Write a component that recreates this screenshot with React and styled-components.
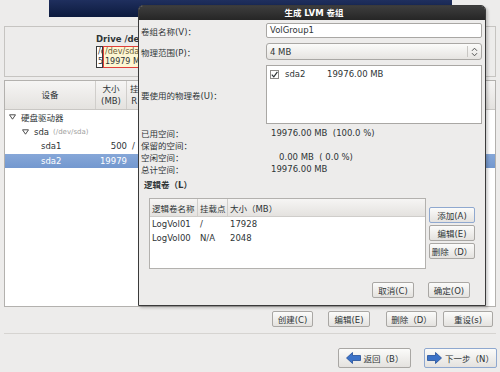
import styled, { createGlobalStyle } from "styled-components";

const GlobalStyle = createGlobalStyle`
  html, body { margin: 0; padding: 0; }
  body {
    width: 500px;
    height: 372px;
    overflow: hidden;
    background: #edeceb;
    font-family: "DejaVu Sans", "Noto Sans CJK SC", sans-serif;
    font-size: 8.5px;
    color: #2e3436;
  }
`;

const Page = styled.div`
  position: relative;
  width: 500px;
  height: 372px;
  display: flex;
  flex-direction: column;
`;

const Banner = styled.div`
  margin-left: 49px;
  width: 403px;
  height: 17px;
  background: linear-gradient(#1f2f5e, #0c1a3d);
`;

const DriveBox = styled.div`
  margin: 9px 4px 0;
  height: 51px;
  box-sizing: border-box;
  border: 1px solid #c6c4c1;
  padding: 6px 0 0 91px;
  overflow: hidden;
`;

const DriveTitle = styled.div`
  font-weight: bold;
  height: 12px;
  line-height: 12px;
  white-space: nowrap;
`;

const DriveBar = styled.div`
  display: flex;
  margin-top: 1px;
  height: 22px;
`;

const BarSeg = styled.div`
  box-sizing: border-box;
  width: ${(p) => p.$w}px;
  height: 22px;
  border: 1px solid ${(p) => p.$border};
  background: ${(p) => p.$bg};
  color: ${(p) => p.$color || "#2e3436"};
  font-size: 8px;
  line-height: 10px;
  padding-left: 1px;
  overflow: hidden;
  white-space: nowrap;
`;

const TablePanel = styled.div`
  margin: 3px 4px 0;
  height: 227px;
  box-sizing: border-box;
  border: 1px solid #b3b1ae;
  background: #fff;
  display: flex;
  flex-direction: column;
  overflow: hidden;
`;

const TableHead = styled.div`
  display: grid;
  grid-template-columns: 91px 31px 1fr;
  height: 28px;
  background: linear-gradient(#f6f5f4, #e4e2df);
  border-bottom: 1px solid #c9c7c4;
`;

const HeadCell = styled.div`
  display: flex;
  align-items: center;
  justify-content: ${(p) => (p.$left ? "flex-start" : "center")};
  text-align: center;
  line-height: 12px;
  padding-left: ${(p) => (p.$left ? 3 : 0)}px;
  border-right: ${(p) => (p.$sep ? "1px solid #d0cecb" : "none")};
  white-space: pre;
`;

const TreeRow = styled.div`
  display: grid;
  grid-template-columns: 91px 31px 1fr;
  height: 14.5px;
  align-items: center;
  background: ${(p) => (p.$sel ? "linear-gradient(#86a7d8, #7398cf)" : "transparent")};
  color: ${(p) => (p.$sel ? "#fff" : "#2e3436")};
`;

const TreeName = styled.div`
  display: flex;
  align-items: center;
  padding-left: ${(p) => p.$indent}px;
  white-space: nowrap;
`;

const Dim = styled.span`
  color: #a0a09e;
  font-size: 7px;
  margin-left: 4px;
`;

const SizeCell = styled.div`
  text-align: right;
`;

const MountCell = styled.div`
  padding-left: 5px;
`;

const ActionRow = styled.div`
  display: flex;
  justify-content: flex-end;
  margin-top: 4px;
  padding-right: 7px;
`;

const Btn = styled.button`
  box-sizing: border-box;
  width: ${(p) => p.$w}px;
  height: ${(p) => p.$h || 16}px;
  margin-left: ${(p) => p.$ml || 0}px;
  padding: 0;
  border: 1px solid ${(p) => (p.$focus ? "#8fa8cf" : "#a9a7a4")};
  border-radius: 2px;
  background: linear-gradient(#fbfbfa, #e4e2df);
  font-family: inherit;
  font-size: 8.5px;
  color: #2e3436;
  display: flex;
  align-items: center;
  justify-content: center;
  gap: 3px;
  white-space: nowrap;
`;

const Separator = styled.div`
  margin: 6px 4px 0;
  border-top: 1px solid #d6d4d1;
`;

const NavRow = styled.div`
  display: flex;
  justify-content: flex-end;
  gap: 13px;
  margin-top: 14px;
  padding-right: 3px;
`;

/* dialog that lies over the installer page */
const Dialog = styled.div`
  position: absolute;
  left: 138px;
  top: 5px;
  width: 348px;
  height: 301px;
  box-sizing: border-box;
  border: 1px solid #3a3a3a;
  border-radius: 5px 5px 0 0;
  background: #edeceb;
  box-shadow: 2px 2px 3px rgba(0, 0, 0, 0.2);
  display: flex;
  flex-direction: column;
`;

const TitleBar = styled.div`
  height: 14px;
  line-height: 14px;
  background: linear-gradient(#3d3d3d, #262626);
  border-radius: 4px 4px 0 0;
  color: #fff;
  font-weight: bold;
  text-align: center;
  padding-left: 4px;
`;

const FormGrid = styled.div`
  display: grid;
  grid-template-columns: 125px 216px;
  grid-template-rows: 15px 17px 59px;
  row-gap: 5px;
  margin-top: 3px;
  padding-left: 2px;
  align-items: center;
`;

const Label = styled.div`
  white-space: nowrap;
`;

const TextInput = styled.div`
  box-sizing: border-box;
  height: 15px;
  border: 1px solid #a9a7a4;
  border-radius: 2px;
  background: #fff;
  padding-left: 3px;
  line-height: 13px;
`;

const Select = styled.div`
  box-sizing: border-box;
  height: 17px;
  border: 1px solid #a9a7a4;
  border-radius: 3px;
  background: linear-gradient(#fbfbfa, #e6e4e1);
  display: flex;
  align-items: center;
  padding-left: 3px;
`;

const SelectText = styled.div`
  flex: 1;
`;

const SelectArrows = styled.div`
  width: 13px;
  height: 11px;
  border-left: 1px solid #c8c6c3;
  display: flex;
  align-items: center;
  justify-content: center;
`;

const ListBox = styled.div`
  box-sizing: border-box;
  height: 59px;
  border: 1px solid #a9a7a4;
  background: #fff;
  padding: 2px 0 0 3px;
  align-self: stretch;
`;

const PvItem = styled.div`
  display: flex;
  align-items: center;
  height: 12px;
`;

const CheckBox = styled.div`
  box-sizing: border-box;
  width: 9px;
  height: 9px;
  border: 1px solid #8c8a87;
  background: #fff;
  display: flex;
  align-items: center;
  justify-content: center;
  margin-right: 6px;
`;

const PvName = styled.span`
  width: 42px;
`;

const StatsGrid = styled.div`
  display: grid;
  grid-template-columns: 130px 1fr;
  grid-auto-rows: 12px;
  margin-top: 3px;
  padding-left: 2px;
  align-items: center;
  white-space: pre;
`;

const Heading = styled.div`
  font-weight: bold;
  height: 12px;
  line-height: 12px;
  margin-top: 4px;
  padding-left: 5px;
`;

const LvArea = styled.div`
  display: flex;
  margin: 7px 0 0 10px;
`;

const LvFrame = styled.div`
  box-sizing: border-box;
  width: 277px;
  height: 71px;
  border: 1px solid #b3b1ae;
  background: #fff;
`;

const LvHead = styled.div`
  display: grid;
  grid-template-columns: 48px 30px 1fr;
  height: 17px;
  background: linear-gradient(#f6f5f4, #e4e2df);
  border-bottom: 1px solid #cfcdca;
`;

const LvHeadCell = styled.div`
  display: flex;
  align-items: center;
  padding-left: 2px;
  border-right: ${(p) => (p.$sep ? "1px solid #d0cecb" : "none")};
  white-space: nowrap;
  overflow: hidden;
`;

const LvRow = styled.div`
  display: grid;
  grid-template-columns: 48px 30px 1fr;
  height: 14px;
  align-items: center;
  & > div {
    padding-left: 2px;
  }
`;

const SideButtons = styled.div`
  display: flex;
  flex-direction: column;
  gap: 2px;
  margin: 9px 0 0 3px;
`;

const DialogButtons = styled.div`
  display: flex;
  justify-content: flex-end;
  gap: 14px;
  margin-top: 13px;
  padding-right: 15px;
`;

const TreeArrow = () => (
  <svg width="7" height="6" viewBox="0 0 7 6" style={{ marginRight: 5 }}>
    <path d="M0.5 0.8 L6.5 0.8 L3.5 5.2 Z" fill="#fff" stroke="#3a3a3a" strokeWidth="0.9" />
  </svg>
);

const UpDown = () => (
  <svg width="7" height="10" viewBox="0 0 7 10">
    <path d="M1 3.8 L3.5 1.2 L6 3.8 M1 6.2 L3.5 8.8 L6 6.2" fill="none" stroke="#555" strokeWidth="1" />
  </svg>
);

const Check = () => (
  <svg width="7" height="7" viewBox="0 0 7 7">
    <path d="M0.8 3.6 L2.8 5.8 L6.4 0.8" fill="none" stroke="#2e3436" strokeWidth="1.2" />
  </svg>
);

const NavArrow = ({ dir }) => (
  <svg width="15" height="12" viewBox="0 0 15 12">
    <g transform={dir === "left" ? "" : "translate(15 0) scale(-1 1)"}>
      <path d="M0.5 6 L6.5 0.5 L6.5 3.5 L14.5 3.5 L14.5 8.5 L6.5 8.5 L6.5 11.5 Z" fill="#3b72c8" stroke="#234f98" strokeWidth="0.8" />
    </g>
  </svg>
);

export default function App() {
  return (
    <Page>
      <GlobalStyle />
      <Banner />
      <DriveBox>
        <DriveTitle>Drive /dev/sda (20480 MB)</DriveTitle>
        <DriveBar>
          <BarSeg $w={7} $border="#3a3a3a" $bg="#fff">
            /d
            <br />
            5(
          </BarSeg>
          <BarSeg $w={60} $border="#e0403a" $bg="#fdf6d2" $color="#6a5d3a">
            /dev/sda2
            <br />
            <span style={{ color: "#2e3436" }}>19979 MB</span>
          </BarSeg>
        </DriveBar>
      </DriveBox>

      <TablePanel>
        <TableHead>
          <HeadCell $sep>设备</HeadCell>
          <HeadCell $sep>{"大小\n(MB)"}</HeadCell>
          <HeadCell $left>{"挂\nR"}</HeadCell>
        </TableHead>
        <TreeRow>
          <TreeName $indent={4}>
            <TreeArrow />
            硬盘驱动器
          </TreeName>
        </TreeRow>
        <TreeRow>
          <TreeName $indent={17}>
            <TreeArrow />
            sda<Dim>(/dev/sda)</Dim>
          </TreeName>
        </TreeRow>
        <TreeRow>
          <TreeName $indent={36}>sda1</TreeName>
          <SizeCell>500</SizeCell>
          <MountCell>/</MountCell>
        </TreeRow>
        <TreeRow $sel>
          <TreeName $indent={36}>sda2</TreeName>
          <SizeCell>19979</SizeCell>
          <MountCell />
        </TreeRow>
      </TablePanel>

      <ActionRow>
        <Btn $w={41}>创建(C)</Btn>
        <Btn $w={42} $ml={15}>编辑(E)</Btn>
        <Btn $w={51} $ml={16}>删除（D）</Btn>
        <Btn $w={50} $ml={6}>重设(s)</Btn>
      </ActionRow>
      <Separator />
      <NavRow>
        <Btn $w={73} $h={20}>
          <NavArrow dir="left" />
          返回（B）
        </Btn>
        <Btn $w={73} $h={20} $focus>
          <NavArrow dir="right" />
          下一步（N）
        </Btn>
      </NavRow>

      <Dialog>
        <TitleBar>生成 LVM 卷组</TitleBar>
        <FormGrid>
          <Label>卷组名称(V)：</Label>
          <TextInput>VolGroup1</TextInput>
          <Label>物理范围(P)：</Label>
          <Select>
            <SelectText>4 MB</SelectText>
            <SelectArrows>
              <UpDown />
            </SelectArrows>
          </Select>
          <Label>要使用的物理卷(U)：</Label>
          <ListBox>
            <PvItem>
              <CheckBox>
                <Check />
              </CheckBox>
              <PvName>sda2</PvName>
              <span>19976.00 MB</span>
            </PvItem>
          </ListBox>
        </FormGrid>
        <StatsGrid>
          <div>已用空间：</div>
          <div>19976.00 MB  (100.0 %)</div>
          <div>保留的空间：</div>
          <div />
          <div>空闲空间：</div>
          <div>{"   0.00 MB  ( 0.0 %)"}</div>
          <div>总计空间：</div>
          <div>19976.00 MB</div>
        </StatsGrid>
        <Heading>逻辑卷（L）</Heading>
        <LvArea>
          <LvFrame>
            <LvHead>
              <LvHeadCell $sep>逻辑卷名称</LvHeadCell>
              <LvHeadCell $sep>挂载点</LvHeadCell>
              <LvHeadCell>大小（MB）</LvHeadCell>
            </LvHead>
            <LvRow>
              <div>LogVol01</div>
              <div>/</div>
              <div>17928</div>
            </LvRow>
            <LvRow>
              <div>LogVol00</div>
              <div>N/A</div>
              <div>2048</div>
            </LvRow>
          </LvFrame>
          <SideButtons>
            <Btn $w={46} $focus>添加(A)</Btn>
            <Btn $w={46}>编辑(E)</Btn>
            <Btn $w={46}>删除（D）</Btn>
          </SideButtons>
        </LvArea>
        <DialogButtons>
          <Btn $w={42}>取消(C)</Btn>
          <Btn $w={42}>确定(O)</Btn>
        </DialogButtons>
      </Dialog>
    </Page>
  );
}
